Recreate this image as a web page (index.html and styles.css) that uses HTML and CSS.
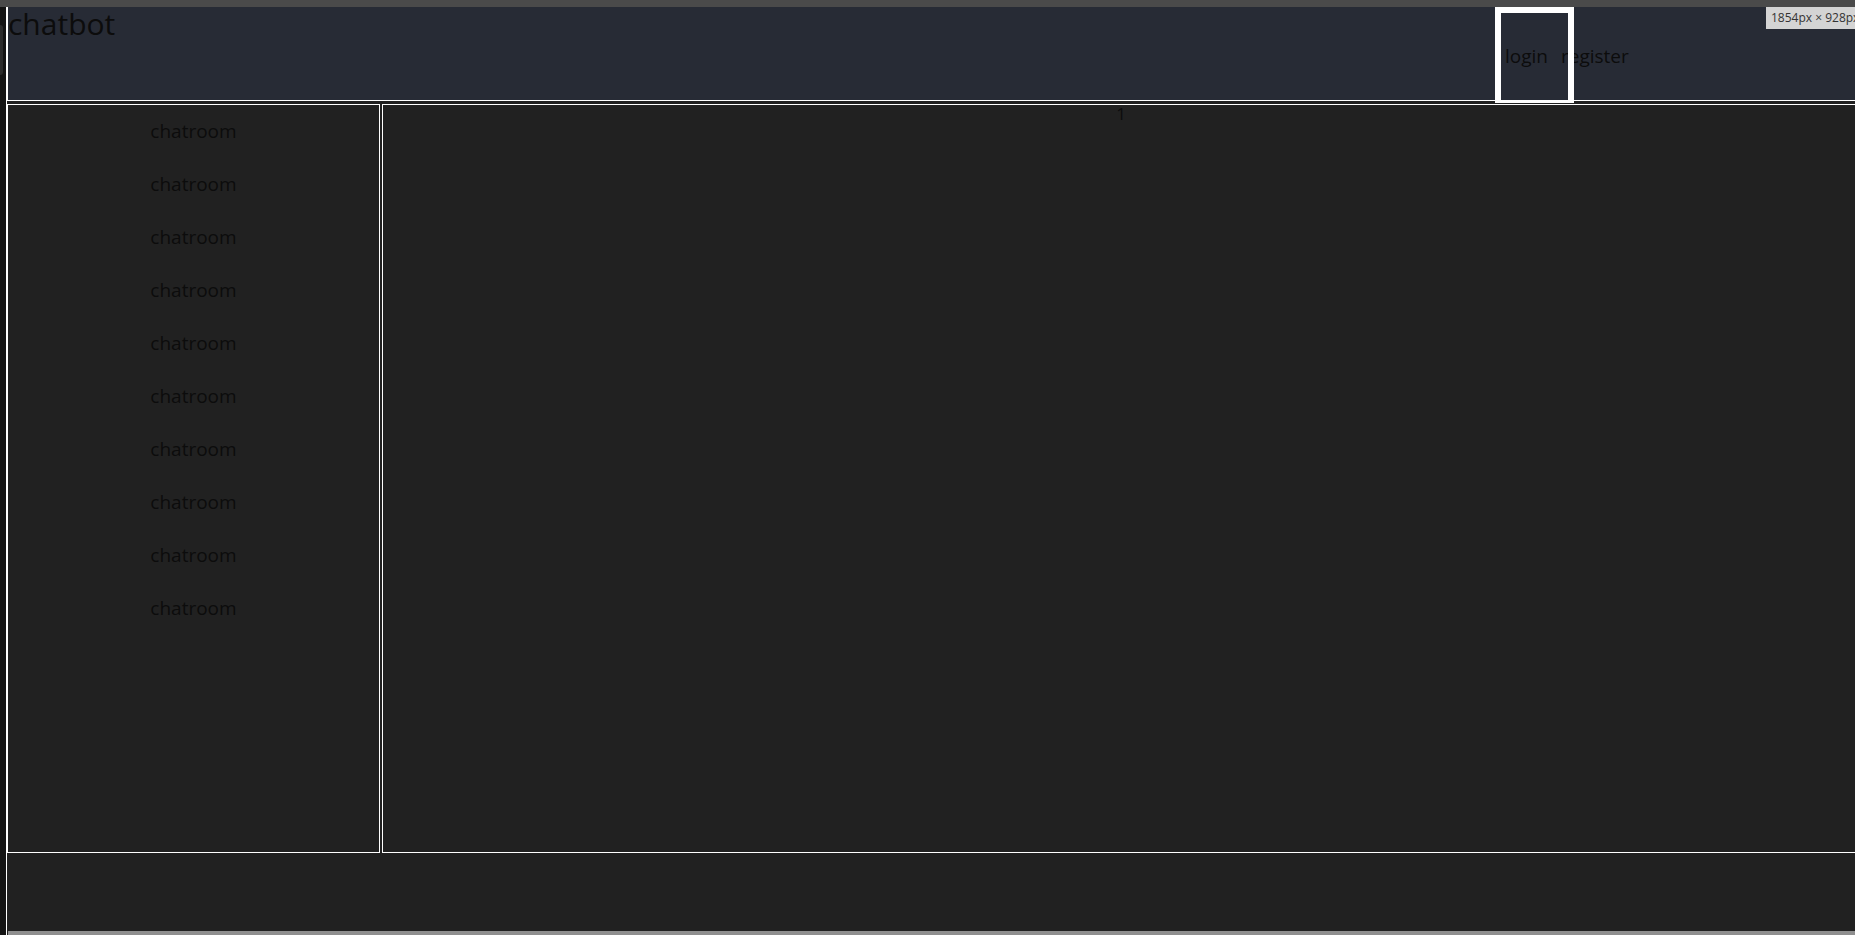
FILE: index.html
```html
<!DOCTYPE html>
<html lang="en">
<head>
<meta charset="utf-8">
<title>chatbot</title>
<link rel="stylesheet" href="styles.css">
</head>
<body>
  <div class="topband"></div>
  <div class="frame">
    <div class="leftstrip"><div class="knob"></div></div>
    <div class="viewport">
      <header class="header">
        <div class="title">chatbot</div>
        <nav class="nav">
          <a class="login">login</a>
          <a class="register">register</a>
        </nav>
      </header>
      <div class="content">
        <aside class="sidebar">
          <div class="room">chatroom</div>
          <div class="room">chatroom</div>
          <div class="room">chatroom</div>
          <div class="room">chatroom</div>
          <div class="room">chatroom</div>
          <div class="room">chatroom</div>
          <div class="room">chatroom</div>
          <div class="room">chatroom</div>
          <div class="room">chatroom</div>
          <div class="room">chatroom</div>
        </aside>
        <main class="main">
          <div class="msg">1</div>
        </main>
      </div>
      <footer class="footer"></footer>
      <div class="scrollbar"></div>
      <div class="size-badge">1854px × 928px</div>
    </div>
  </div>
</body>
</html>
```
FILE: styles.css
```css
html, body {
  margin: 0;
  padding: 0;
  overflow: hidden;
}

body {
  background: #141414;
  width: 1855px;
  height: 935px;
  font-family: "Open Sans", "Noto Sans", sans-serif;
}

.topband {
  height: 7px;
  background: #4a4a4a;
}

.frame {
  display: flex;
  height: 928px;
  width: 1860px;
}

.leftstrip {
  width: 6px;
  flex: none;
  background: #141414;
  padding-top: 18px;
  box-sizing: border-box;
}

.knob {
  width: 3px;
  height: 50px;
  background: #2b2b2b;
  border-radius: 0 4px 4px 0;
}

.viewport {
  position: relative;
  width: 1854px;
  flex: none;
  box-sizing: border-box;
  border-left: 1px solid #ffffff;
  background: #212121;
  display: flex;
  flex-direction: column;
  overflow: hidden;
}

.header {
  height: 93px;
  flex: none;
  background: #272b35;
  border-left: 1px solid #ffffff;
  border-bottom: 1px solid #ffffff;
  display: grid;
  grid-template-columns: 1497px auto;
  align-items: start;
}

.title {
  font-size: 30px;
  line-height: 41px;
  margin-top: -4px;
  color: #0c0c0c;
}

.nav {
  display: flex;
  align-items: flex-start;
  gap: 13px;
  padding-top: 36px;
  font-size: 19px;
  line-height: 26px;
  color: #0c0c0c;
}

.login {
  position: relative;
}

.login::after {
  content: "";
  position: absolute;
  left: -10px;
  top: -36px;
  width: 79px;
  height: 96px;
  box-sizing: border-box;
  border: 6px solid #ffffff;
  border-bottom-width: 3px;
}

.content {
  display: flex;
  gap: 2px;
  margin-top: 3px;
  height: 749px;
  flex: none;
}

.sidebar {
  width: 373px;
  flex: none;
  box-sizing: border-box;
  border: 1px solid #ffffff;
}

.room {
  padding: 15px 0;
  line-height: 23px;
  font-size: 19px;
  text-align: center;
  color: #0c0c0c;
}

.main {
  width: 1478px;
  flex: none;
  box-sizing: border-box;
  border: 1px solid #ffffff;
}

.msg {
  text-align: center;
  font-size: 17px;
  line-height: 18px;
  color: #0c0c0c;
}

.footer {
  height: 78px;
  flex: none;
}

.scrollbar {
  height: 4px;
  flex: none;
  margin-left: 1px;
  background: #8f8f8f;
}

.size-badge {
  position: absolute;
  top: 0;
  left: 1759px;
  height: 22px;
  padding: 0 5px;
  background: #d4d4d4;
  color: #333333;
  font-size: 12px;
  line-height: 22px;
  white-space: nowrap;
}
```
